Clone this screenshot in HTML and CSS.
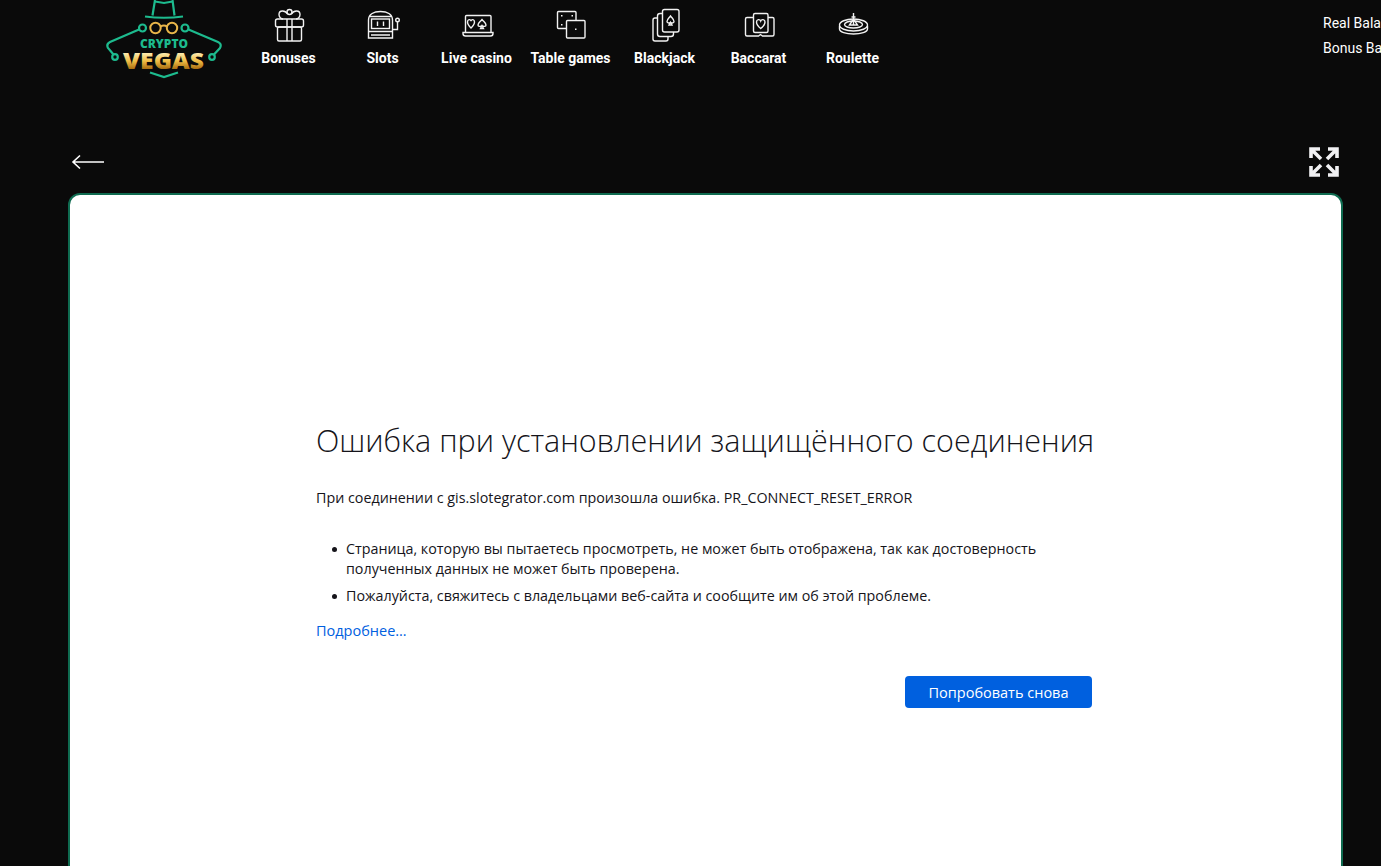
FILE: index.html
```html
<!DOCTYPE html>
<html lang="en">
<head>
    <meta charset="UTF-8">
    <meta name="viewport" content="width=device-width, initial-scale=1.0">
    <title>Crypto Vegas</title>
    <link rel="stylesheet" href="styles.css">
</head>
<body>
    <header class="header">
        <a class="logo" href="#">
            <svg width="116" height="80" viewBox="106 0 116 80">
                <defs>
                    <linearGradient id="gold" x1="0" y1="0" x2="0" y2="1">
                        <stop offset="0.25" stop-color="#fff4c4"/>
                        <stop offset="0.55" stop-color="#f0bd45"/>
                        <stop offset="0.8" stop-color="#a86c10"/>
                    </linearGradient>
                </defs>
                <g fill="none" stroke="#1dbb8e" stroke-width="2.200">
                    <path d="M155 0L152.500 15.500M172.500 0L174.500 15.500M155 1.500L164 3L172.500 1.500"/>
                    <path d="M145 16.500Q164 19 183 16.500"/>
                    <circle cx="142.500" cy="28" r="3.500"/>
                    <circle cx="185" cy="28" r="3.500"/>
                    <circle cx="115" cy="57" r="2.800"/>
                    <circle cx="212" cy="57" r="2.800"/>
                    <path d="M139 29.500L110 42Q106 44 108 48L113.500 54.500"/>
                    <path d="M188.500 29.500L218 42Q222 44 220 48L214 54.500"/>
                    <path d="M150 72.500L164 77L178 72.500"/>
                </g>
                <g fill="none" stroke="#e9b64a" stroke-width="2">
                    <circle cx="155.500" cy="28" r="5.200"/>
                    <circle cx="172" cy="28" r="5.200"/>
                    <path d="M160.500 26.500Q164 24.500 167 26.500"/>
                </g>
                <text class="logo-crypto" x="140" y="48" textLength="48" lengthAdjust="spacingAndGlyphs">CRYPTO</text>
                <text class="logo-vegas" x="123" y="68.500" textLength="81" lengthAdjust="spacingAndGlyphs" fill="url(#gold)">VEGAS</text>
            </svg>
        </a>

        <nav class="nav">
            <a class="nav-item" href="#">
                <svg class="nav-icon" viewBox="0 0 40 40">
                    <rect x="6.500" y="14" width="28" height="8" rx="2"/>
                    <rect x="8.500" y="22" width="24" height="14" rx="1.500"/>
                    <path d="M18 14V36M23 14V36"/>
                    <circle cx="20.500" cy="7" r="2.500"/>
                    <path d="M18.500 9C16 5 10 5 10 9.500C10 12 12 14 14 14M22.500 9C25 5 31 5 31 9.500C31 12 29 14 27 14"/>
                </svg>
                <span>Bonuses</span>
            </a>
            <a class="nav-item" href="#">
                <svg class="nav-icon" viewBox="0 0 40 40">
                    <path d="M5.500 33V15C5.500 9 11 6.500 17.500 6.500S29.500 9 29.500 15V33Z"/>
                    <path d="M6 11.500H29M6 26.500H29M8 30H27"/>
                    <rect x="8.500" y="14" width="18" height="9.500"/>
                    <path d="M14.500 16.500V21M20.500 16.500V21"/>
                    <circle cx="34.500" cy="15" r="1.800"/>
                    <path d="M34.500 17V24.500H30"/>
                </svg>
                <span>Slots</span>
            </a>
            <a class="nav-item" href="#">
                <svg class="nav-icon" viewBox="0 0 40 40">
                    <path d="M8.500 28V11.500Q8.500 10.500 9.500 10.500H33Q34 10.500 34 11.500V28"/>
                    <path d="M6 27.500H36V28.500Q36 31 33.500 31H8.500Q6 31 6 28.500Z"/>
                    <path d="M14 23C11 20 10.500 18.500 10.500 17C10.500 14 13.500 14 14 16C14.500 14 17.500 14 17.500 17C17.500 18.500 17 20 14 23Z"/>
                    <path d="M25 14.500C27 17 29 18 29 20C29 21.500 26.500 22 25 20.500C23.500 22 21 21.500 21 20C21 18 23 17 25 14.500ZM23.500 23.500H26.500L25 20.500Z"/>
                </svg>
                <span>Live casino</span>
            </a>
            <a class="nav-item" href="#">
                <svg class="nav-icon" viewBox="0 0 40 40">
                    <path d="M15 23.500H7.500Q6.500 23.500 6.500 22.500V7.500Q6.500 6.500 7.500 6.500H24Q25 6.500 25 7.500V15"/>
                    <rect x="15.500" y="15.500" width="18.500" height="17.500" rx="1"/>
                    <path class="dot" d="M10 10h1.500v1.500H10ZM20.500 10H22v1.500h-1.500ZM10 19h1.500v1.500H10ZM24 23.500h1.500V25H24Z"/>
                </svg>
                <span>Table games</span>
            </a>
            <a class="nav-item" href="#">
                <svg class="nav-icon" viewBox="0 0 40 40">
                    <rect x="17.500" y="4.500" width="16.500" height="22.500" rx="2"/>
                    <path d="M17.500 8.500H15Q12.500 8.500 12.500 11V29Q12.500 31.500 15 31.500H26Q28.500 31.500 28.500 29V27"/>
                    <path d="M12.500 13H10Q8 13 8 15V34Q8 36 10 36H21Q23 36 23 34V31.500"/>
                    <path d="M25.500 11C27 13 29 14.500 29 16.500C29 18 27 18.500 25.500 17.200C24 18.500 22 18 22 16.500C22 14.500 24 13 25.500 11ZM24 20H27L25.500 17.200Z"/>
                </svg>
                <span>Blackjack</span>
            </a>
            <a class="nav-item" href="#">
                <svg class="nav-icon" viewBox="0 0 40 40">
                    <rect x="14.500" y="8.500" width="14.500" height="19" rx="1.500"/>
                    <path d="M14.500 12.500H8Q6.500 12.500 6.500 14V29.500Q6.500 31 8 31H19.500L21.500 29.500L23.500 31H33.500Q35 31 35 29.500V14Q35 12.500 33.500 12.500H29"/>
                    <path d="M21.700 23.500C18 20.500 17.500 18.800 17.500 17C17.500 14 21 14 21.700 16C22.400 14 26 14 26 17C26 18.800 25.500 20.500 21.700 23.500Z"/>
                </svg>
                <span>Baccarat</span>
            </a>
            <a class="nav-item" href="#">
                <svg class="nav-icon" viewBox="0 0 40 40">
                    <ellipse cx="20.500" cy="20" rx="14" ry="6"/>
                    <ellipse cx="20.500" cy="19.500" rx="9" ry="3.500"/>
                    <path d="M6.500 21V24C6.500 27 13 29 20.500 29S34.500 27 34.500 24V21"/>
                    <path d="M20.500 8V20M18.500 12H22.500M16.500 20L20.500 14L24.500 20Z"/>
                </svg>
                <span>Roulette</span>
            </a>
        </nav>

        <div class="balance">
            <div>Real Balance</div>
            <div>Bonus Balance</div>
        </div>
    </header>

    <div class="toolbar">
        <a class="back" href="#">
            <svg width="34" height="16" viewBox="0 0 34 16">
                <path d="M33 8H2M9 1.500L2 8L9 14.500"/>
            </svg>
        </a>
        <a class="fullscreen" href="#">
            <svg width="30" height="30" viewBox="0 0 30 30">
                <path d="M2 11V2H11M2 2L12 12M19 2H28V11M28 2L18 12M2 19V28H11M2 28L12 18M28 19V28H19M28 28L18 18"/>
            </svg>
        </a>
    </div>

    <main class="game-frame">
        <div class="error-page">
            <h1>Ошибка при установлении защищённого соединения</h1>
            <p class="error-text">При соединении с gis.slotegrator.com произошла ошибка. PR_CONNECT_RESET_ERROR</p>
            <ul class="error-list">
                <li>Страница, которую вы пытаетесь просмотреть, не может быть отображена, так как достоверность полученных данных не может быть проверена.</li>
                <li>Пожалуйста, свяжитесь с владельцами веб-сайта и сообщите им об этой проблеме.</li>
            </ul>
            <a class="more-link" href="#">Подробнее…</a>
            <div class="error-actions">
                <button class="retry">Попробовать снова</button>
            </div>
        </div>
    </main>
</body>
</html>
```

FILE: styles.css
```css
html, body {
    height: 100%;
}

body {
    margin: 0;
    overflow: hidden;
    background-color: #0a0a0a;
    color: #fff;
    font-family: Roboto, Arial, sans-serif;
}

a {
    color: inherit;
    text-decoration: none;
}

.header {
    display: flex;
    align-items: flex-start;
    height: 147px;
    padding-left: 106px;
}

.logo {
    display: block;
    flex-shrink: 0;
    width: 116px;
    height: 80px;
}

.logo-crypto {
    font: 800 12px "Open Sans", sans-serif;
    fill: #1dbb8e;
}

.logo-vegas {
    font: 800 23px "Open Sans", sans-serif;
}

.nav {
    display: flex;
    flex-shrink: 0;
    margin-left: 19.5px;
    padding-top: 5px;
}

.nav-item {
    display: flex;
    flex-direction: column;
    align-items: center;
    width: 94px;
    font-size: 14px;
    font-weight: 700;
    line-height: 16px;
    white-space: nowrap;
}

.nav-icon {
    width: 40px;
    height: 40px;
    margin-bottom: 5px;
    fill: none;
    stroke: #f2f2f2;
    stroke-width: 1.4;
}

.nav-icon .dot {
    fill: #f2f2f2;
    stroke: none;
}

.balance {
    flex-shrink: 0;
    margin-left: 423.5px;
    padding-top: 11px;
    font-size: 14px;
    line-height: 25px;
    white-space: nowrap;
}

.toolbar {
    display: flex;
    justify-content: space-between;
    align-items: flex-start;
    height: 46px;
    padding: 0 42px 0 71px;
}

.back {
    margin-top: 7px;
}

.back svg {
    display: block;
    fill: none;
    stroke: #fff;
    stroke-width: 1.6;
}

.fullscreen svg {
    display: block;
    fill: none;
    stroke: #f1f1f3;
    stroke-width: 3.6;
}

.game-frame {
    box-sizing: border-box;
    height: 720px;
    margin: 0 38px 0 68px;
    padding-top: 224px;
    background-color: #fff;
    border: 2px solid #0f6b50;
    border-radius: 12px;
    color: #15141a;
    font-family: "Open Sans", sans-serif;
}

.error-page {
    width: 776px;
    margin-left: 246px;
}

h1 {
    margin: 0 0 27px;
    font-size: 30.5px;
    font-weight: 300;
    line-height: 42px;
    white-space: nowrap;
}

.error-text {
    margin: 0 0 31px;
    font-size: 14.3px;
    line-height: 20px;
}

.error-list {
    margin: 0 0 13px;
    padding: 0 0 0 30px;
    font-size: 14.3px;
    line-height: 20px;
    list-style: none;
}

.error-list li {
    position: relative;
    margin-bottom: 7px;
}

.error-list li::before {
    content: "";
    position: absolute;
    top: 8px;
    left: -14px;
    width: 5px;
    height: 5px;
    background-color: #15141a;
    border-radius: 50%;
}

.more-link {
    color: #0060df;
    font-size: 14.5px;
    line-height: 20px;
}

.error-actions {
    display: flex;
    justify-content: flex-end;
    margin-top: 35px;
}

.retry {
    width: 187px;
    height: 32px;
    background-color: #0060df;
    border: none;
    border-radius: 4px;
    color: #fff;
    font-family: "Open Sans", sans-serif;
    font-size: 14.5px;
    font-weight: 500;
}
```
